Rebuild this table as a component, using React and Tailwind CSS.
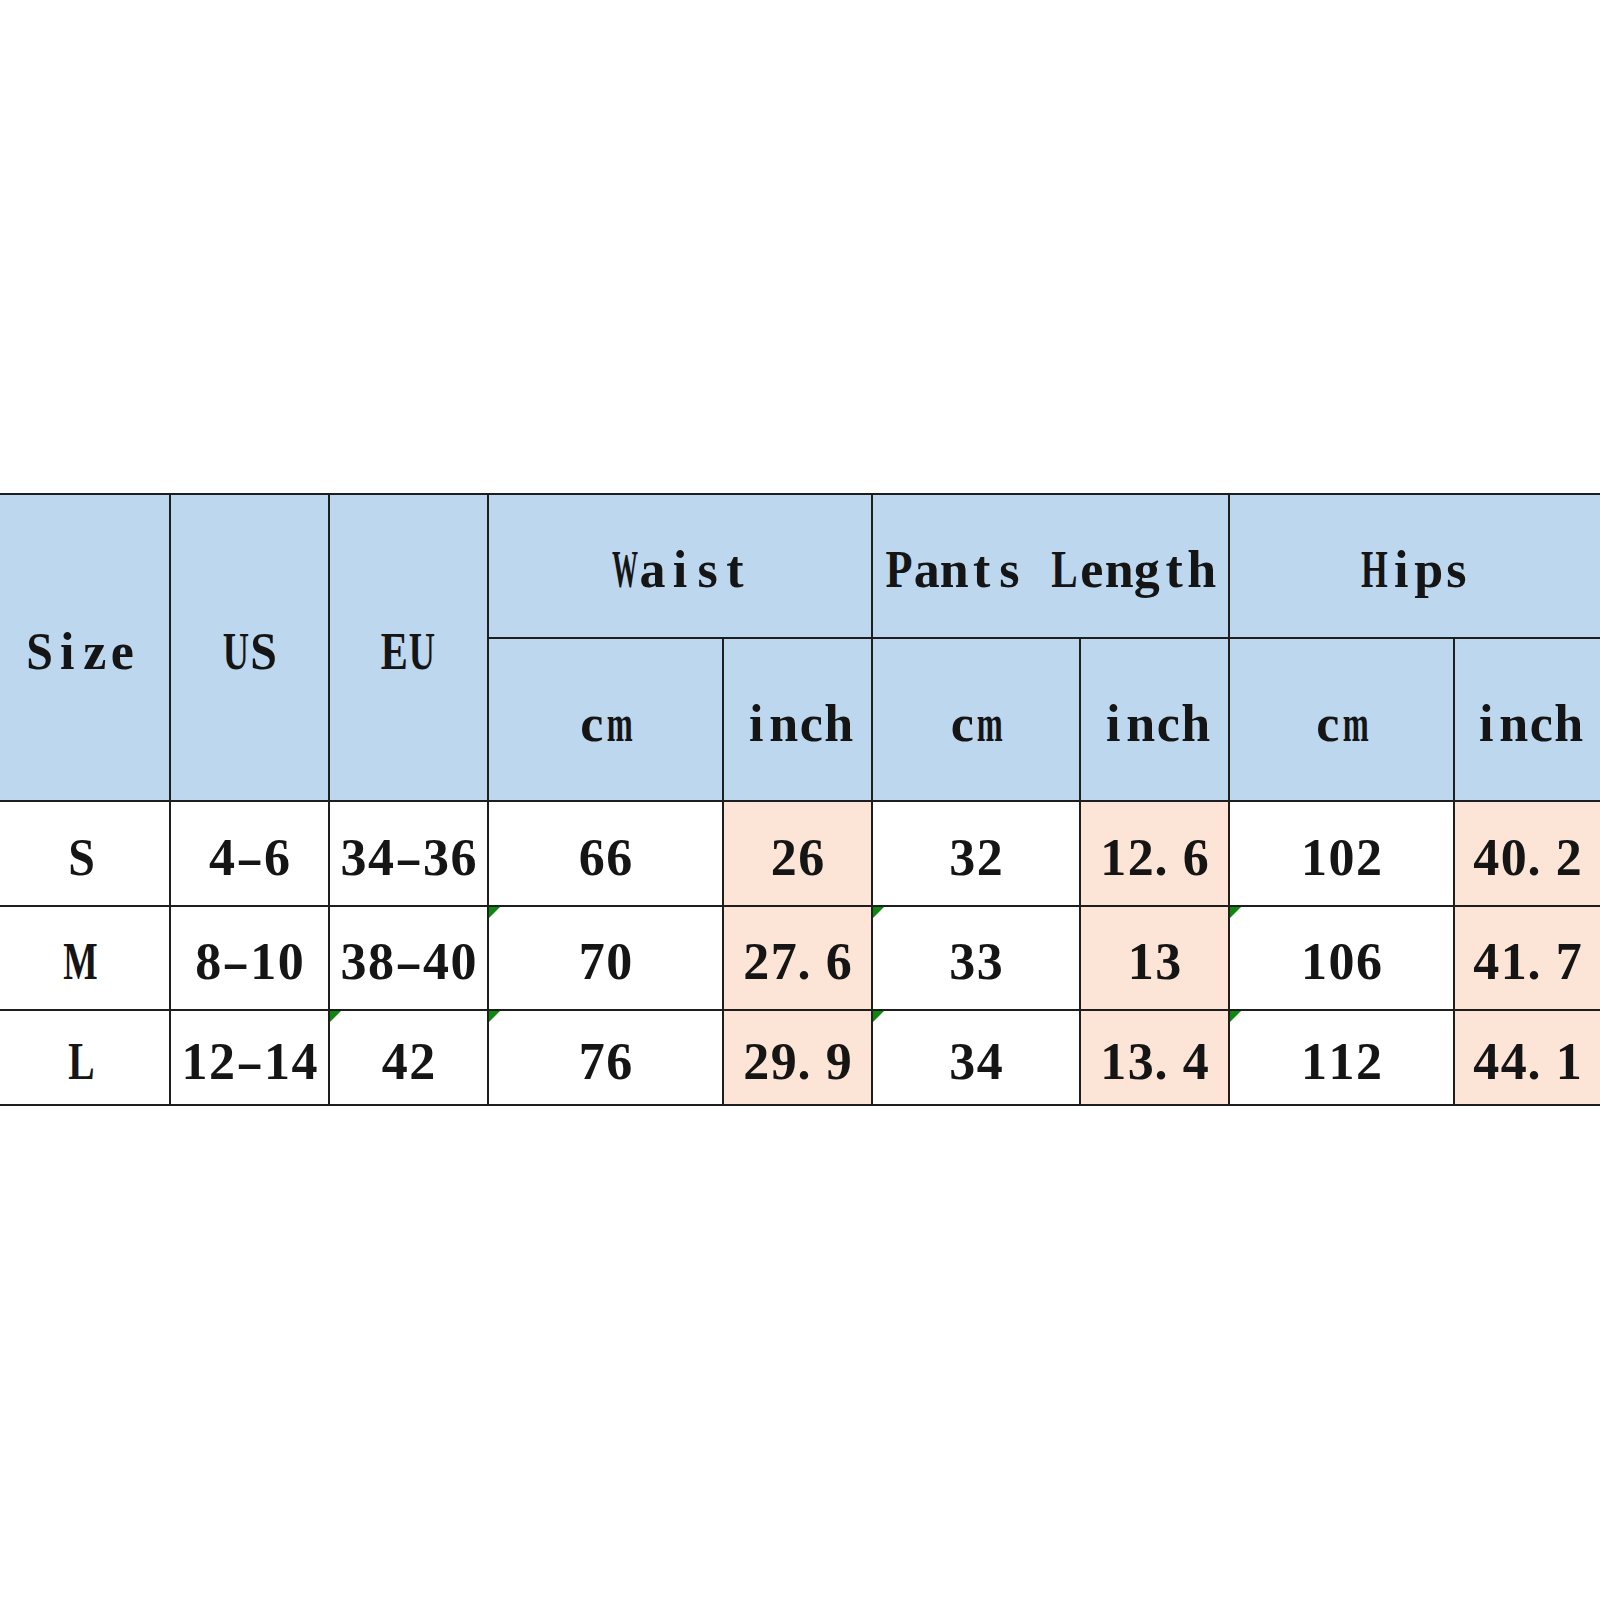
import React from "react";

// monospaced look: every character sits in its own half-width cell,
// wide glyphs are squeezed so they stay inside it
const SQUEEZE = {
  W: "scale-x-[0.5]",
  M: "scale-x-[0.7]",
  m: "scale-x-[0.6]",
  H: "scale-x-[0.66]",
  U: "scale-x-[0.7]",
  E: "scale-x-[0.78]",
  L: "scale-x-[0.76]",
  P: "scale-x-[0.85]",
  S: "scale-x-[0.92]",
  "-": "scale-x-[1.6]",
};

function Mono({ text }) {
  return (
    <span className="whitespace-nowrap">
      {text.split("").map((c, i) => (
        <span
          key={i}
          className={`inline-flex w-[27.5px] ${c === "." ? "justify-start" : "justify-center"}`}
        >
          {SQUEEZE[c] ? (
            <span className={`inline-block ${SQUEEZE[c]}`}>{c}</span>
          ) : c === " " ? (
            "\u00a0"
          ) : (
            c
          )}
        </span>
      ))}
    </span>
  );
}

function Mark() {
  return (
    <span className="absolute left-0 top-0 w-0 h-0 border-t-[11px] border-t-[#0f870f] border-r-[11px] border-r-transparent" />
  );
}

const rows = [
  { size: "S", us: "4-6", eu: "34-36", v: ["66", "26", "32", "12.6", "102", "40.2"], marks: [] },
  { size: "M", us: "8-10", eu: "38-40", v: ["70", "27.6", "33", "13", "106", "41.7"], marks: [3, 5, 7] },
  { size: "L", us: "12-14", eu: "42", v: ["76", "29.9", "34", "13.4", "112", "44.1"], marks: [2, 3, 5, 7] },
];

const th = "relative border-2 border-[#1e1e1e] bg-[#bdd7ee] p-0 pt-[8px] text-center align-middle font-bold";
const td = "relative border-2 border-[#1e1e1e] p-0 pt-[8px] text-center align-middle font-bold";

export default function App() {
  return (
    <div className="h-[1600px] w-[1600px] overflow-hidden bg-white pt-[493px] font-['Liberation_Serif','Noto_Sans_CJK_SC',serif] text-[52px] leading-none text-[#151515]">
      <table className="ml-[-9px] w-[1609px] table-fixed border-collapse">
        <colgroup>
          <col className="w-[178px]" />
          <col className="w-[159px]" />
          <col className="w-[159px]" />
          <col className="w-[235px]" />
          <col className="w-[149px]" />
          <col className="w-[208px]" />
          <col className="w-[149px]" />
          <col className="w-[225px]" />
          <col className="w-[147px]" />
        </colgroup>
        <thead>
          <tr className="h-[144px]">
            <th rowSpan={2} className={th}><Mono text="Size" /></th>
            <th rowSpan={2} className={th}><Mono text="US" /></th>
            <th rowSpan={2} className={th}><Mono text="EU" /></th>
            <th colSpan={2} className={th}><Mono text="Waist" /></th>
            <th colSpan={2} className={th}><Mono text="Pants Length" /></th>
            <th colSpan={2} className={th}><Mono text="Hips" /></th>
          </tr>
          <tr className="h-[163px]">
            {["cm", "inch", "cm", "inch", "cm", "inch"].map((t, i) => (
              <th key={i} className={th}><Mono text={t} /></th>
            ))}
          </tr>
        </thead>
        <tbody>
          {rows.map((r, ri) => {
            const cells = [r.size, r.us, r.eu, ...r.v];
            return (
              <tr key={r.size} className={ri === 0 ? "h-[105px]" : ri === 1 ? "h-[104px]" : "h-[95px]"}>
                {cells.map((c, ci) => (
                  <td
                    key={ci}
                    className={`${td} ${ci >= 3 && ci % 2 === 0 ? "bg-[#fce4d6]" : "bg-white"}`}
                  >
                    {r.marks.includes(ci) && <Mark />}
                    <Mono text={c} />
                  </td>
                ))}
              </tr>
            );
          })}
        </tbody>
      </table>
    </div>
  );
}
